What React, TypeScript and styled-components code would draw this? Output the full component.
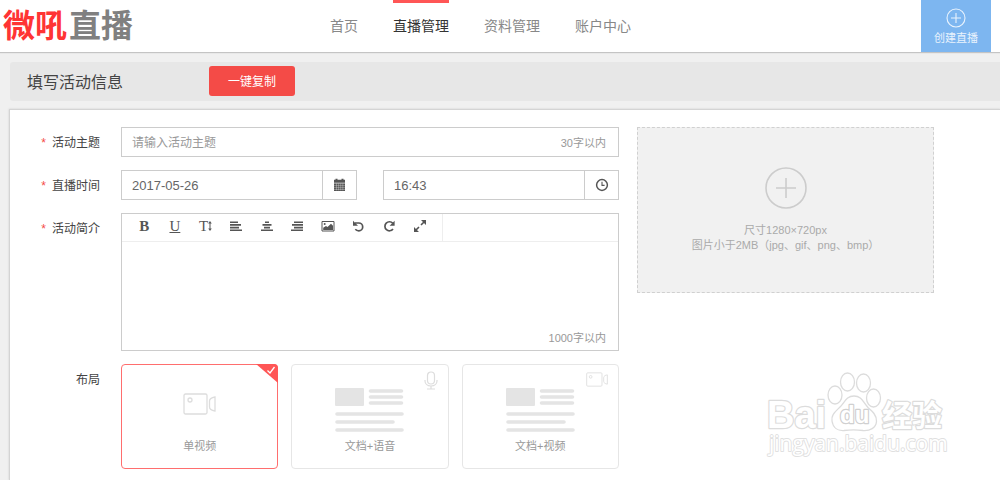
import React from "react";
import styled, { createGlobalStyle } from "styled-components";

const GlobalStyle = createGlobalStyle`
  *, *::before, *::after { box-sizing: border-box; }
  body {
    margin: 0;
    background: #f0f0f0;
    color: #444;
    font-family: "Liberation Sans", "Noto Sans CJK SC", sans-serif;
    font-size: 12px;
  }
  button, input, textarea { font: inherit; color: inherit; }
  svg { display: block; }
`;

const Page = styled.div`
  position: relative;
  display: flex;
  flex-direction: column;
  min-height: 100vh;
  overflow: hidden;
`;

/* Header */

const Header = styled.header`
  display: flex;
  align-items: stretch;
  height: 52px;
  padding: 0 9px 0 3px;
  background: #fff;
  box-shadow: 0 1px 1px #c4c4c4;
`;

const Logo = styled.a`
  display: flex;
  align-items: center;
  gap: 2px;
  width: 327px;
  color: #808080;
  font-size: 32px;
  font-weight: 700;
  line-height: 52px;
  text-decoration: none;
`;

const LogoAccent = styled.span`
  color: #ff3434;
`;

const Nav = styled.nav`
  display: flex;
  flex: 1;
  gap: 35px;
`;

const NavLink = styled.a<{ $active?: boolean }>`
  border-top: 3px solid ${(p) => (p.$active ? "#ff5656" : "transparent")};
  color: ${(p) => (p.$active ? "#333" : "#888")};
  font-size: 14px;
  line-height: 46px;
  text-decoration: none;
  white-space: nowrap;
`;

const CreateButton = styled.button`
  display: flex;
  flex-direction: column;
  align-items: center;
  gap: 2px;
  width: 70px;
  padding: 8px 0 0;
  border: 0;
  background: #7db6f0;
  color: #e9f3fd;
  font-size: 11px;
  line-height: 16px;
`;

/* Title bar */

const TitleBar = styled.div`
  display: flex;
  align-items: center;
  height: 39px;
  margin: 10px 0 8px 10px;
  padding: 0 0 2px 17px;
  border-radius: 3px 0 0 3px;
  background: #e7e7e7;
`;

const Title = styled.h1`
  width: 182px;
  margin: 0;
  color: #444;
  font-size: 16px;
  font-weight: 400;
`;

const CopyButton = styled.button`
  width: 86px;
  height: 30px;
  padding: 0;
  border: 0;
  border-radius: 3px;
  background: #f44b47;
  color: #fff;
  font-size: 12px;
`;

/* Form */

const Panel = styled.main`
  flex: 1;
  margin-left: 9px;
  padding: 17px 66px 11px 0;
  border: solid #d4d4d4;
  border-width: 1px 0 0 1px;
  background: #fff;
  box-shadow: 0 0 2px #ccc;
`;

const Form = styled.form`
  display: flex;
  align-items: flex-start;
  gap: 18px;
`;

const Rows = styled.div`
  display: flex;
  flex: 1;
  flex-direction: column;
  gap: 13px;
  min-width: 0;
`;

const Row = styled.div`
  display: grid;
  grid-template-columns: 90px minmax(0, 1fr);
  column-gap: 21px;
`;

const Label = styled.label`
  height: 30px;
  color: #444;
  line-height: 32px;
  text-align: right;
`;

const Star = styled.span`
  margin-right: 6px;
  color: #f44b47;
`;

const Field = styled.div`
  display: flex;
  height: 30px;
  border: 1px solid #ccc;
  background: #fff;
`;

const TextInput = styled.input<{ $size: number }>`
  flex: 1;
  min-width: 0;
  padding: 1px 10px 0;
  border: 0;
  outline: 0;
  background: transparent;
  color: #666;
  font-size: ${(p) => p.$size}px;
  &::placeholder { color: #999; opacity: 1; }
`;

const Hint = styled.span`
  padding-right: 12px;
  color: #999;
  font-size: 11px;
  line-height: 31px;
`;

const Pair = styled.div`
  display: grid;
  grid-template-columns: 1fr 1fr;
  gap: 26px;
`;

const Addon = styled.button`
  display: flex;
  align-items: center;
  justify-content: center;
  width: 34px;
  padding: 0;
  border: 0;
  border-left: 1px solid #ccc;
  background: #fff;
  color: #555;
`;

const Editor = styled.div`
  display: flex;
  flex-direction: column;
  height: 138px;
  border: 1px solid #ccc;
`;

const Toolbar = styled.div`
  display: flex;
  border-bottom: 1px solid #eee;
`;

const Tools = styled.div`
  display: flex;
  width: 321px;
  height: 27px;
  padding: 0 7px;
  border-right: 1px solid #eee;
`;

const Tool = styled.button`
  display: flex;
  flex: 1;
  align-items: center;
  justify-content: center;
  padding: 0 0 4px;
  border: 0;
  background: transparent;
  color: #555;
`;

const EditorText = styled.textarea`
  flex: 1;
  padding: 8px 11px;
  border: 0;
  outline: 0;
  resize: none;
`;

const EditorHint = styled(Hint)`
  align-self: flex-end;
  line-height: 24px;
`;

const Cards = styled.div`
  display: grid;
  grid-template-columns: repeat(3, 1fr);
  gap: 13px;
`;

const HiddenRadio = styled.input`
  position: absolute;
  width: 100%;
  height: 100%;
  inset: 0;
  margin: 0;
  opacity: 0;
`;

const Card = styled.label<{ $selected?: boolean }>`
  position: relative;
  display: flex;
  flex-direction: column;
  align-items: center;
  justify-content: flex-end;
  height: 105px;
  padding-bottom: 14px;
  border: 1px solid ${(p) => (p.$selected ? "#ff6e6e" : "#e6e6e6")};
  border-radius: 4px;
  color: #999;
  font-size: 11px;
  line-height: 16px;
`;

const CardArt = styled.span<{ $gap: number }>`
  display: flex;
  margin-bottom: ${(p) => p.$gap}px;
`;

const Corner = styled.span<{ $top: number; $right: number }>`
  position: absolute;
  top: ${(p) => p.$top}px;
  right: ${(p) => p.$right}px;
`;

const Upload = styled.button`
  display: flex;
  flex-direction: column;
  align-items: center;
  width: 297px;
  height: 166px;
  padding: 39px 0 0;
  border: 1px dashed #d0d0d0;
  background: #f1f1f1;
  color: #ccc;
  font-size: 11px;
  line-height: 15px;
`;

const UploadText = styled.span`
  margin-top: 14px;
  color: #aaa;
`;

const Watermark = styled.div`
  position: absolute;
  right: 50px;
  bottom: 15px;
  pointer-events: none;
`;

/* Drawings */

const PlusCircle = ({ size, reach }: { size: number; reach: number }) => {
  const c = size / 2;
  return (
    <svg width={size} height={size} fill="none" stroke="currentColor" strokeWidth={size > 30 ? 1.6 : 1.1}>
      <circle cx={c} cy={c} r={c - 1} />
      <path d={`M${c - reach} ${c}H${c + reach}M${c} ${c - reach}V${c + reach}`} />
    </svg>
  );
};

const CalendarIcon = () => (
  <svg width="14" height="14" viewBox="0 0 14 14" fill="currentColor">
    <path d="M1 1.800h1.500V.800h2v1h4v-1h2v1H12v3H1z" />
    <path d="M1 5.400h11V13H1z" />
    <path d="M1 7.600h11M1 9.600h11M1 11.500h11M3.500 5.400v7M5.600 5.400v7M7.700 5.400v7M9.800 5.400v7" stroke="#fff" strokeWidth=".3" />
  </svg>
);

const ClockIcon = () => (
  <svg width="14" height="14" viewBox="0 0 14 14" fill="none" stroke="currentColor">
    <circle cx="7" cy="7" r="5.400" strokeWidth="1.500" />
    <path d="M7 3.800V7.400H9.600" strokeWidth="1.100" />
  </svg>
);

const Svg14 = ({ children }: { children: React.ReactNode }) => (
  <svg width="14" height="14" viewBox="0 0 14 14" fill="none" stroke="currentColor" strokeWidth="1.600">
    {children}
  </svg>
);

const Serif = styled.span<{ $bold?: boolean; $underline?: boolean }>`
  font-family: "Liberation Serif", serif;
  font-size: 15px;
  line-height: 14px;
  font-weight: ${(p) => (p.$bold ? 700 : 400)};
  text-decoration: ${(p) => (p.$underline ? "underline" : "none")};
`;

const tools: [string, React.ReactNode][] = [
  ["加粗", <Serif $bold>B</Serif>],
  ["下划线", <Serif $underline>U</Serif>],
  [
    "字号",
    <>
      <Serif>T</Serif>
      <svg width="4" height="12" viewBox="0 0 4 12" fill="currentColor">
        <path d="M2 1l1.800 2.400H2.500v5.200h1.300L2 11 .2 8.600H1.500V3.400H.2z" />
      </svg>
    </>,
  ],
  ["左对齐", <Svg14><path d="M1 3.200h8M1 5.900h11M1 8.600h9M1 11.300h12" /></Svg14>],
  ["居中", <Svg14><path d="M5 3.200h4M2.500 5.900h9M4 8.600h6M1 11.300h12" /></Svg14>],
  ["右对齐", <Svg14><path d="M4 3.200h9M2 5.900h11M4 8.600h9M1 11.300h12" /></Svg14>],
  [
    "图片",
    <Svg14>
      <path d="M1 2.500h12v9.500H1z" strokeWidth="1" />
      <path d="M2.200 11V8.800L5 7l1.500 1L10 4.800l2 2V11z" fill="currentColor" stroke="none" />
      <circle cx="3.700" cy="5" r="1" fill="currentColor" stroke="none" />
    </Svg14>,
  ],
  [
    "撤销",
    <Svg14>
      <path d="M4 4h3.800a3.900 3.900 0 0 1 0 7.800c-1.600 0-2.600-.5-3.500-1.500" strokeWidth="1.700" />
      <path d="M2 1.800v5h5z" fill="currentColor" stroke="none" />
    </Svg14>,
  ],
  [
    "重做",
    <Svg14>
      <path d="M10.800 4.300A4.500 4.500 0 1 0 11 10" strokeWidth="1.700" />
      <path d="M12.600 1.800v5H7.600z" fill="currentColor" stroke="none" />
    </Svg14>,
  ],
  [
    "全屏",
    <Svg14>
      <path d="M8 6l3-3M6 8l-3 3" />
      <path d="M8 1h5v5zM6 13H1V8z" fill="currentColor" stroke="none" />
    </Svg14>,
  ],
];

const CameraIcon = ({ width, height }: { width: number; height: number }) => (
  <svg width={width} height={height} viewBox="0 0 33 22" fill="none" stroke="#ddd" strokeWidth="1.300">
    <rect x="1" y="1" width="23" height="20" rx="1.500" />
    <circle cx="7" cy="7" r="2" />
    <path d="M32 4v14c-3-.5-5.500-2-5.500-4V8c0-2 2.500-3.500 5.500-4z" />
  </svg>
);

const MicIcon = () => (
  <svg width="14" height="19" viewBox="0 0 14 19" fill="none" stroke="#ddd" strokeWidth="1.200">
    <rect x="3.500" y="1" width="7" height="12" rx="3.500" />
    <path d="M1 9v1c0 3 2.500 5 6 5s6-2 6-5V9M7 15v3M3 18h8" />
  </svg>
);

const DocumentArt = () => (
  <svg width="69" height="44" viewBox="0 0 69 44" fill="#e4e4e4">
    <rect x="0" y="0" width="29" height="18" rx="1" />
    <path
      d="M35.500 3h31M35.500 9h31M35.500 15h31M2 26h65M2 34h56M2 42h65"
      stroke="#e4e4e4"
      strokeWidth="3.600"
      strokeLinecap="round"
    />
  </svg>
);

const CheckCorner = () => (
  <svg width="22" height="19" viewBox="0 0 22 19">
    <path d="M0 0h18a4 4 0 0 1 4 4v15z" fill="#ff5656" />
    <path d="M11.500 6.500l2.500 2.500 4.500-6" fill="none" stroke="#fff" strokeWidth="1.300" />
  </svg>
);

const BaiduMark = () => (
  <svg
    width="186"
    height="98"
    viewBox="0 0 186 98"
    fill="#fff"
    stroke="#dcdcdc"
    strokeWidth="2.400"
    strokeLinejoin="round"
    paintOrder="stroke"
    fontFamily="'Liberation Sans', 'Noto Sans CJK SC', sans-serif"
    fontWeight="700"
  >
    <text x="3" y="61" fontSize="38">Bai</text>
    <g strokeWidth="1.300" paintOrder="normal">
      <ellipse cx="71" cy="28" rx="7" ry="9" />
      <ellipse cx="83.500" cy="15" rx="7" ry="9" />
      <ellipse cx="99.500" cy="16" rx="7" ry="9" />
      <ellipse cx="109.500" cy="31" rx="7" ry="9" />
      <path d="M90 29c-8 0-9 6-14 11-5 5-9 8-8 14 1 7 6 10 12 9.500 7-.8 12-.8 19 0 7 .5 13-2.500 13.500-9 .5-6-4-10-8.500-14-5-5-6-11.500-14-11.500z" />
    </g>
    <text x="76" y="56" fontSize="24" stroke="#d0d0d0">du</text>
    <text x="118" y="59" fontSize="30">经验</text>
    <text
      x="5"
      y="84"
      fontSize="21"
      fontFamily="'Open Sans', sans-serif"
      fontWeight="400"
      strokeWidth="1.800"
      stroke="#e0e0e0"
    >
      jingyan.baidu.com
    </text>
  </svg>
);

export default function App() {
  return (
    <Page>
      <GlobalStyle />
      <Header>
        <Logo href="#">
          <LogoAccent>微吼</LogoAccent>
          <span>直播</span>
        </Logo>
        <Nav>
          <NavLink href="#">首页</NavLink>
          <NavLink href="#" $active>直播管理</NavLink>
          <NavLink href="#">资料管理</NavLink>
          <NavLink href="#">账户中心</NavLink>
        </Nav>
        <CreateButton type="button">
          <PlusCircle size={20} reach={5} />
          创建直播
        </CreateButton>
      </Header>

      <TitleBar>
        <Title>填写活动信息</Title>
        <CopyButton type="button">一键复制</CopyButton>
      </TitleBar>

      <Panel>
        <Form>
          <Rows>
            <Row>
              <Label htmlFor="topic"><Star>*</Star>活动主题</Label>
              <Field>
                <TextInput id="topic" $size={12} placeholder="请输入活动主题" />
                <Hint>30字以内</Hint>
              </Field>
            </Row>
            <Row>
              <Label htmlFor="date"><Star>*</Star>直播时间</Label>
              <Pair>
                <Field>
                  <TextInput id="date" $size={13} defaultValue="2017-05-26" />
                  <Addon type="button" aria-label="选择日期"><CalendarIcon /></Addon>
                </Field>
                <Field>
                  <TextInput $size={13} aria-label="开始时间" defaultValue="16:43" />
                  <Addon type="button" aria-label="选择时间"><ClockIcon /></Addon>
                </Field>
              </Pair>
            </Row>
            <Row>
              <Label htmlFor="intro"><Star>*</Star>活动简介</Label>
              <Editor>
                <Toolbar>
                  <Tools>
                    {tools.map(([name, icon]) => (
                      <Tool key={name} type="button" aria-label={name}>{icon}</Tool>
                    ))}
                  </Tools>
                </Toolbar>
                <EditorText id="intro" />
                <EditorHint>1000字以内</EditorHint>
              </Editor>
            </Row>
            <Row>
              <Label as="span">布局</Label>
              <Cards role="radiogroup" aria-label="布局">
                <Card $selected>
                  <HiddenRadio type="radio" name="layout" defaultChecked />
                  <CardArt $gap={23}><CameraIcon width={33} height={22} /></CardArt>
                  单视频
                  <Corner $top={-1} $right={-1}><CheckCorner /></Corner>
                </Card>
                <Card>
                  <HiddenRadio type="radio" name="layout" />
                  <CardArt $gap={6}><DocumentArt /></CardArt>
                  文档+语音
                  <Corner $top={6} $right={10}><MicIcon /></Corner>
                </Card>
                <Card>
                  <HiddenRadio type="radio" name="layout" />
                  <CardArt $gap={6}><DocumentArt /></CardArt>
                  文档+视频
                  <Corner $top={7} $right={10}><CameraIcon width={22} height={15} /></Corner>
                </Card>
              </Cards>
            </Row>
          </Rows>
          <Upload type="button">
            <PlusCircle size={42} reach={10} />
            <UploadText>
              尺寸1280×720px
              <br />
              图片小于2MB（jpg、gif、png、bmp）
            </UploadText>
          </Upload>
        </Form>
      </Panel>

      <Watermark><BaiduMark /></Watermark>
    </Page>
  );
}
